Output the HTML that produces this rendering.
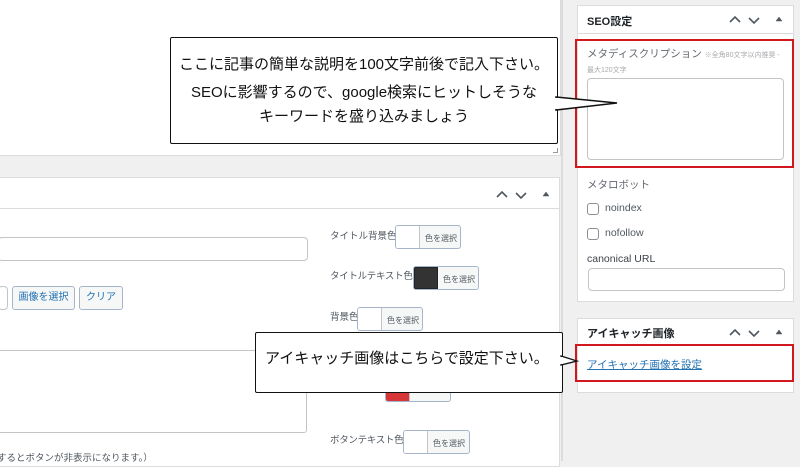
<!DOCTYPE html>
<html><head><meta charset="utf-8"><style>
*{box-sizing:border-box;margin:0;padding:0}
body{width:800px;height:461px;overflow:hidden;background:#f0f0f1;font-family:"Liberation Sans","Noto Sans CJK JP",sans-serif;position:relative;color:#1d2327}
.a{position:absolute}
.w{background:#fff;border:1px solid #dcdcde}
.lbl{font-size:11px;color:#50575e;white-space:nowrap}
.cb{position:absolute;height:24px;border:1px solid #a7b5cc;border-radius:3px;background:#f6f7f7;font-size:8px;color:#50575e;overflow:hidden;white-space:nowrap}
.cb i{display:block;position:absolute;left:0;top:0;bottom:0;width:24px;background:#fff;border-right:1px solid #c3c4c7}
.cb span{position:absolute;left:29px;top:7px}
.btn{position:absolute;height:24px;border:1px solid #a7b5cc;border-radius:3px;background:#f6f7f7;font-size:10px;color:#2271b1;text-align:center;line-height:22px}
.call{position:absolute;background:#fff;border:1.5px solid #111;border-radius:2px;font-size:15px;color:#111;text-align:center}
</style></head><body>
<div class="a w" style="left:-2px;top:-2px;width:563px;height:158px"></div>
<div class="a" style="left:553px;top:148px;width:5px;height:5px;border-right:1px solid #999;border-bottom:1px solid #999"></div>
<div class="a" style="left:561px;top:0;width:2px;height:461px;background:#dcdcde"></div>
<div class="a w" style="left:-2px;top:177px;width:562px;height:290px"></div>
<div class="a" style="left:0;top:208px;width:559px;height:1px;background:#dcdcde"></div>
<svg class="a" style="left:490px;top:184px" width="70" height="20" fill="none" stroke="#50575e" stroke-width="1.6"><path d="M7 13 L12 8 L17 13"/><path d="M26 9 L31 14 L36 9"/><path d="M53 12 L56 8 L59 12 Z" fill="#50575e" stroke-width="0.5"/></svg>
<div class="a" style="left:-2px;top:237px;width:310px;height:24px;border:1px solid #c3c4c7;border-radius:4px;background:#fff"></div>
<div class="a" style="left:-2px;top:286px;width:10px;height:24px;border:1px solid #c3c4c7;border-radius:4px;background:#fff"></div>
<div class="btn" style="left:12px;top:286px;width:63px">画像を選択</div>
<div class="btn" style="left:79px;top:286px;width:44px">クリア</div>
<div class="a" style="left:-2px;top:350px;width:309px;height:83px;border:1px solid #c3c4c7;border-radius:3px;background:#fff"></div>
<div class="a lbl" style="left:-3px;top:450px;font-size:9.5px">するとボタンが非表示になります。）</div>
<div class="a lbl" style="left:330px;top:228px;font-size:9.5px">タイトル背景色</div>
<div class="cb" style="left:395px;top:225px;width:66px"><i></i><span>色を選択</span></div>
<div class="a lbl" style="left:330px;top:268px;font-size:9.5px;letter-spacing:-0.3px">タイトルテキスト色</div>
<div class="cb" style="left:413px;top:266px;width:66px"><i style="background:#333;border:1px solid #1d2327"></i><span>色を選択</span></div>
<div class="a lbl" style="left:330px;top:309px;font-size:9.5px">背景色</div>
<div class="cb" style="left:357px;top:307px;width:66px"><i></i><span>色を選択</span></div>
<div class="cb" style="left:385px;top:378px;width:66px"><i style="background:#d63638"></i></div>
<div class="a lbl" style="left:330px;top:432px;font-size:9.5px;letter-spacing:-0.3px">ボタンテキスト色</div>
<div class="cb" style="left:403px;top:430px;width:67px"><i></i><span>色を選択</span></div>

<div class="a w" style="left:577px;top:5px;width:217px;height:297px"></div>
<div class="a" style="left:577px;top:33px;width:217px;height:1px;background:#dcdcde"></div>
<div class="a" style="left:587px;top:13px;font-size:11px;font-weight:bold">SEO設定</div>
<svg class="a" style="left:723px;top:9px" width="70" height="20" fill="none" stroke="#50575e" stroke-width="1.6"><path d="M7 13 L12 8 L17 13"/><path d="M26 9 L31 14 L36 9"/><path d="M53 12 L56 8 L59 12 Z" fill="#50575e" stroke-width="0.5"/></svg>
<div class="a" style="left:575px;top:39px;width:219px;height:129px;border:2px solid #d0181e"></div>
<div class="a lbl" style="left:587px;top:46px;font-size:10.5px;color:#646970">メタディスクリプション <span style="font-size:7px;color:#a7aaad">※全角80文字以内推奨 -</span></div>
<div class="a lbl" style="left:587px;top:65px;font-size:7px;color:#a7aaad">最大120文字</div>
<div class="a" style="left:587px;top:78px;width:197px;height:82px;border:1px solid #c3c4c7;border-radius:4px;background:#fff"></div>
<div class="a lbl" style="left:587px;top:177px;font-size:10.5px;color:#646970">メタロボット</div>
<div class="a" style="left:587px;top:203px;width:12px;height:12px;border:1px solid #8c8f94;border-radius:3px"></div>
<div class="a lbl" style="left:605px;top:202px;font-size:10.5px">noindex</div>
<div class="a" style="left:587px;top:228px;width:12px;height:12px;border:1px solid #8c8f94;border-radius:3px"></div>
<div class="a lbl" style="left:605px;top:227px;font-size:10.5px">nofollow</div>
<div class="a lbl" style="left:587px;top:253px;font-size:10.5px;color:#3c434a">canonical URL</div>
<div class="a" style="left:588px;top:268px;width:197px;height:23px;border:1px solid #c3c4c7;border-radius:4px;background:#fff"></div>
<div class="a w" style="left:577px;top:318px;width:217px;height:75px"></div>
<div class="a" style="left:587px;top:325px;font-size:11px;font-weight:bold">アイキャッチ画像</div>
<svg class="a" style="left:723px;top:322px" width="70" height="20" fill="none" stroke="#50575e" stroke-width="1.6"><path d="M7 13 L12 8 L17 13"/><path d="M26 9 L31 14 L36 9"/><path d="M53 12 L56 8 L59 12 Z" fill="#50575e" stroke-width="0.5"/></svg>
<div class="a" style="left:575px;top:344px;width:219px;height:38px;border:2px solid #d0181e"></div>
<div class="a" style="left:587px;top:357px;font-size:10.5px;color:#2271b1;text-decoration:underline">アイキャッチ画像を設定</div>

<div class="call" style="left:170px;top:37px;width:388px;height:107px;padding-top:13px;line-height:28px">ここに記事の簡単な説明を100文字前後で記入下さい。<br>SEOに影響するので、google検索にヒットしそうな<br><span style="position:relative;top:-4px">キーワードを盛り込みましょう</span></div>
<svg class="a" style="left:555px;top:90px" width="70" height="25"><polygon points="1,7 62,13 1,20" fill="#fff" stroke="#111" stroke-width="1.5"/><rect x="0" y="8" width="3" height="11" fill="#fff"/></svg>
<div class="call" style="left:255px;top:332px;width:308px;height:61px;padding-top:14px;font-size:15px;text-align:left;padding-left:9px">アイキャッチ画像はこちらで設定下さい。</div>
<svg class="a" style="left:560px;top:352px" width="22" height="20"><polygon points="1,4 17,9 1,13" fill="#fff" stroke="#111" stroke-width="1.3"/><rect x="0" y="5" width="3" height="7" fill="#fff"/></svg>
</body></html>
